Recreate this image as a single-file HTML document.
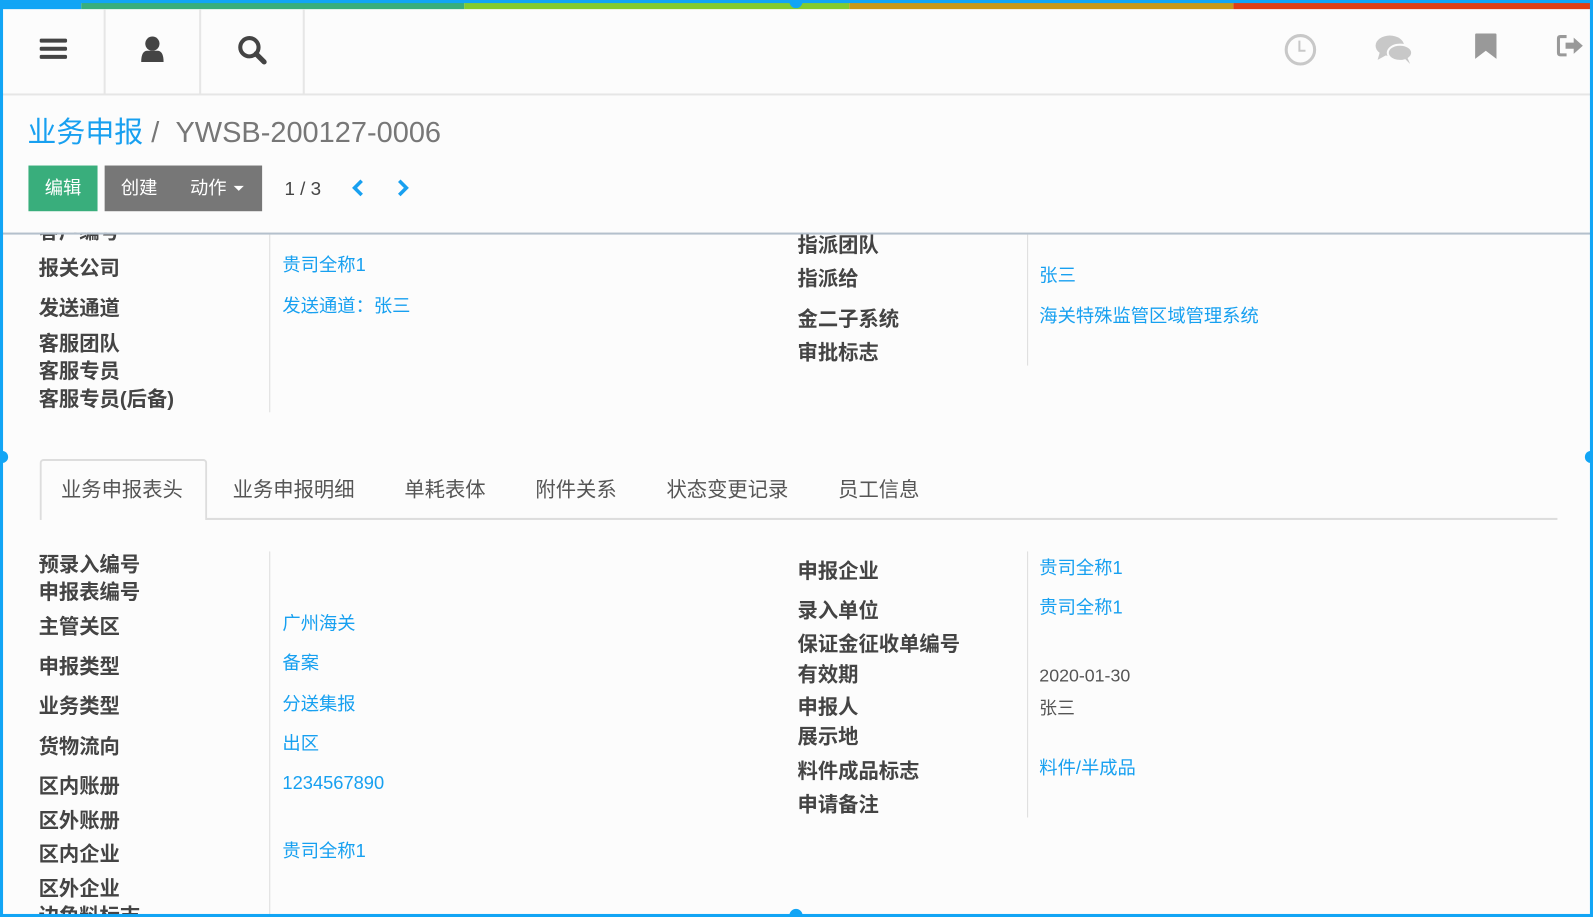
<!DOCTYPE html>
<html><head><meta charset="utf-8"><style>
*{margin:0;padding:0;box-sizing:border-box}
html,body{width:1593px;height:917px;overflow:hidden;background:#fcfcfc;font-family:"Liberation Sans","Noto Sans CJK SC",sans-serif}
#w{position:absolute;left:0;top:0;width:1568px;height:903px;transform:scale(1.01594,1.01551);transform-origin:0 0;overflow:hidden}
.a{position:absolute;white-space:nowrap;line-height:22px;margin-top:2px}
.l{font-size:20px;font-weight:bold;color:#444}
.v{font-size:18px;color:#17a0f0}
.d{font-size:17.5px;color:#555}
.vl{position:absolute;width:1px;background:#ddd}
.t{position:absolute;top:472px;font-size:20px;color:#555;line-height:22px;transform:translateX(-50%)}
</style></head><body><div id="w">
<div style="position:absolute;top:0;left:0;width:1568px;height:9px;display:flex">
<div style="width:80px;background:#12a5f5"></div><div style="width:377px;background:#39ae7c"></div><div style="width:379px;background:#84cb2e"></div><div style="width:378px;background:#c99818"></div><div style="flex:1;background:#e03f14"></div></div>
<div style="position:absolute;top:0;left:0;width:1568px;height:3px;background:#12a5f5"></div>
<div style="position:absolute;left:777px;top:0;width:13px;height:8px;border-radius:0 0 7px 7px;background:#12a5f5"></div>
<div style="position:absolute;top:9px;left:0;width:1568px;height:85px;border-bottom:2px solid #e6e6e6"></div>
<div class="vl" style="left:102px;top:9px;height:84px;width:2px;background:#e6e6e6"></div>
<div class="vl" style="left:196px;top:9px;height:84px;width:2px;background:#e6e6e6"></div>
<div class="vl" style="left:298px;top:9px;height:84px;width:2px;background:#e6e6e6"></div>
<svg style="position:absolute;left:39px;top:37px" width="28" height="24"><rect y="1" width="27" height="4" rx="1.5" fill="#444"/><rect y="9" width="27" height="4" rx="1.5" fill="#444"/><rect y="17" width="27" height="4" rx="1.5" fill="#444"/></svg>
<svg style="position:absolute;left:138px;top:35px" width="24" height="28"><circle cx="12" cy="8" r="7" fill="#444"/><path d="M1 26 Q1 15 7 15 L17 15 Q23 15 23 26 Z" fill="#444"/></svg>
<svg style="position:absolute;left:233px;top:34px" width="32" height="32"><circle cx="12.5" cy="12.5" r="9" fill="none" stroke="#444" stroke-width="4"/><path d="M19 19 L27 27" stroke="#444" stroke-width="5" stroke-linecap="round"/></svg>
<svg style="position:absolute;left:1263px;top:32px" width="34" height="34"><circle cx="17" cy="17" r="14" fill="none" stroke="#c8c8c8" stroke-width="3"/><path d="M16 8 V18 H22" fill="none" stroke="#c8c8c8" stroke-width="2"/></svg>
<svg style="position:absolute;left:1353px;top:32px" width="40" height="34"><ellipse cx="15" cy="13" rx="14" ry="10" fill="#c8c8c8"/><path d="M5 20 L3 27 L12 22Z" fill="#c8c8c8"/><ellipse cx="25" cy="20" rx="12" ry="8" fill="#c8c8c8" stroke="#fcfcfc" stroke-width="2"/><path d="M30 26 L35 31 L32 24Z" fill="#c8c8c8"/></svg>
<svg style="position:absolute;left:1451px;top:32px" width="24" height="28"><path d="M1 2 Q1 1 2 1 L21 1 Q22 1 22 2 L22 26 L11.5 18 L1 26 Z" fill="#999"/></svg>
<svg style="position:absolute;left:1532px;top:33px" width="30" height="26"><path d="M10 3 H4 Q2 3 2 5 V19 Q2 21 4 21 H10" fill="none" stroke="#999" stroke-width="3"/><path d="M9 9 H17 V4 L26 12 L17 20 V15 H9 Z" fill="#999"/></svg>
<div class="a" style="left:27px;top:112px;font-size:28.5px;line-height:34px;color:#18a0f0">业务申报<span style="color:#777"> /&nbsp; YWSB-200127-0006</span></div>
<div class="a" style="left:28px;top:161px;width:68px;height:45px;background:#39ae7c;color:#fff;font-size:18px;line-height:45px;text-align:center">编辑</div>
<div class="a" style="left:103px;top:161px;width:155px;height:45px;background:#777;color:#fff;font-size:18px;line-height:45px"><span style="position:absolute;left:16px">创建</span><span style="position:absolute;left:84px">动作</span><span style="position:absolute;left:127px;top:20px;border:5px solid transparent;border-top-color:#fff"></span></div>
<div class="a" style="left:280px;top:173px;font-size:18.5px;color:#444">1 / 3</div>
<svg style="position:absolute;left:346px;top:176px" width="14" height="18"><path d="M10 2 L3 9 L10 16" fill="none" stroke="#18a0f0" stroke-width="3.5"/></svg>
<svg style="position:absolute;left:389px;top:176px" width="14" height="18"><path d="M4 2 L11 9 L4 16" fill="none" stroke="#18a0f0" stroke-width="3.5"/></svg>
<div class="vl" style="left:265px;top:231px;height:175px"></div>
<div class="vl" style="left:1011px;top:231px;height:129px"></div>
<div class="a l" style="left:38px;top:216px">客户编号</div>
<div style="position:absolute;left:0;top:210px;width:1568px;height:19px;background:#fcfcfc"></div>
<div style="position:absolute;left:0;top:229px;width:1568px;height:2px;background:#b4c0cc"></div>
<div class="a l" style="left:38px;top:252px">报关公司</div>
<div class="a l" style="left:38px;top:291px">发送通道</div>
<div class="a l" style="left:38px;top:326px">客服团队</div>
<div class="a l" style="left:38px;top:353px">客服专员</div>
<div class="a l" style="left:38px;top:381px">客服专员(后备)</div>
<div class="a v" style="left:278px;top:248px">贵司全称1</div>
<div class="a v" style="left:278px;top:288px">发送通道：张三</div>
<div class="a l" style="left:785px;top:229px">指派团队</div>
<div class="a l" style="left:785px;top:262px">指派给</div>
<div class="a l" style="left:785px;top:302px">金二子系统</div>
<div class="a l" style="left:785px;top:335px">审批标志</div>
<div class="a v" style="left:1023px;top:258px">张三</div>
<div class="a v" style="left:1023px;top:298px">海关特殊监管区域管理系统</div>
<div style="position:absolute;left:203px;top:510px;width:1330px;height:2px;background:#ddd"></div>
<div style="position:absolute;left:39px;top:452px;width:165px;height:60px;border:2px solid #ddd;border-bottom:none;border-radius:4px 4px 0 0;background:#fcfcfc"></div>
<div class="t" style="left:120px">业务申报表头</div>
<div class="t" style="left:289px">业务申报明细</div>
<div class="t" style="left:438px">单耗表体</div>
<div class="t" style="left:567px">附件关系</div>
<div class="t" style="left:716px">状态变更记录</div>
<div class="t" style="left:865px">员工信息</div>
<div class="vl" style="left:265px;top:543px;height:360px"></div>
<div class="vl" style="left:1011px;top:543px;height:262px"></div>
<div class="a l" style="left:38px;top:544px">预录入编号</div>
<div class="a l" style="left:38px;top:571px">申报表编号</div>
<div class="a l" style="left:38px;top:605px">主管关区</div>
<div class="a l" style="left:38px;top:644px">申报类型</div>
<div class="a l" style="left:38px;top:683px">业务类型</div>
<div class="a l" style="left:38px;top:723px">货物流向</div>
<div class="a l" style="left:38px;top:762px">区内账册</div>
<div class="a l" style="left:38px;top:796px">区外账册</div>
<div class="a l" style="left:38px;top:829px">区内企业</div>
<div class="a l" style="left:38px;top:863px">区外企业</div>
<div class="a l" style="left:38px;top:890px">边角料标志</div>
<div class="a v" style="left:278px;top:601px">广州海关</div>
<div class="a v" style="left:278px;top:640px">备案</div>
<div class="a v" style="left:278px;top:680px">分送集报</div>
<div class="a v" style="left:278px;top:719px">出区</div>
<div class="a v" style="left:278px;top:758px">1234567890</div>
<div class="a v" style="left:278px;top:825px">贵司全称1</div>
<div class="a l" style="left:785px;top:550px">申报企业</div>
<div class="a l" style="left:785px;top:589px">录入单位</div>
<div class="a l" style="left:785px;top:622px">保证金征收单编号</div>
<div class="a l" style="left:785px;top:652px">有效期</div>
<div class="a l" style="left:785px;top:684px">申报人</div>
<div class="a l" style="left:785px;top:713px">展示地</div>
<div class="a l" style="left:785px;top:747px">料件成品标志</div>
<div class="a l" style="left:785px;top:780px">申请备注</div>
<div class="a v" style="left:1023px;top:546px">贵司全称1</div>
<div class="a v" style="left:1023px;top:585px">贵司全称1</div>
<div class="a d" style="left:1023px;top:652px">2020-01-30</div>
<div class="a d" style="left:1023px;top:684px">张三</div>
<div class="a v" style="left:1023px;top:743px">料件/半成品</div>
<div style="position:absolute;left:0;top:0;width:1568px;height:903px;border:3px solid #12a5f5"></div>
<div style="position:absolute;left:-4px;top:444px;width:12px;height:12px;border-radius:50%;background:#12a5f5"></div>
<div style="position:absolute;left:1560px;top:444px;width:12px;height:12px;border-radius:50%;background:#12a5f5"></div>
<div style="position:absolute;left:777px;top:895px;width:13px;height:13px;border-radius:50%;background:#12a5f5"></div>
</div></body></html>
